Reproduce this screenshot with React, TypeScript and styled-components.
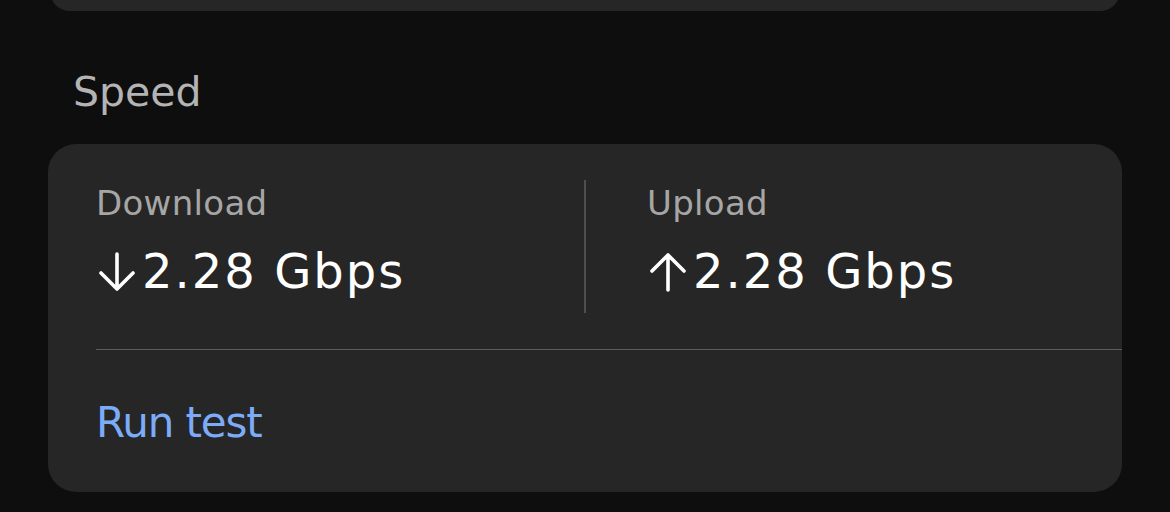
import React from 'react'
import styled, { createGlobalStyle } from 'styled-components'

const GlobalStyle = createGlobalStyle`
  html, body {
    margin: 0;
    padding: 0;
    background: #0e0e0e;
  }
  body {
    font-family: "DejaVu Sans", Roboto, sans-serif;
    -webkit-font-smoothing: antialiased;
  }
`

type Dir = 'down' | 'up'

type Stat = {
  label: string
  dir: Dir
  value: string
}

const stats: Stat[] = [
  { label: 'Download', dir: 'down', value: '2.28 Gbps' },
  { label: 'Upload', dir: 'up', value: '2.28 Gbps' },
]

const ArrowIcon: React.FC<{ dir: Dir }> = ({ dir }) => (
  <ArrowSvg viewBox="0 0 40 40" aria-hidden="true">
    {dir === 'down' ? (
      <path d="M20 2 V37 M4 21 L20 37 L36 21" />
    ) : (
      <path d="M20 38 V3 M4 19 L20 3 L36 19" />
    )}
  </ArrowSvg>
)

const StatBlock: React.FC<{ stat: Stat }> = ({ stat }) => (
  <>
    <Label>{stat.label}</Label>
    <Value>
      <ArrowIcon dir={stat.dir} />
      {stat.value}
    </Value>
  </>
)

const App: React.FC = () => {
  return (
    <>
      <GlobalStyle />
      <Page>
        <PrevCard />
        <SectionTitle>Speed</SectionTitle>
        <Card>
          <StatsRow>
            <StatCol>
              <StatBlock stat={stats[0]} />
            </StatCol>
            <VDivider />
            <StatCol $inset>
              <StatBlock stat={stats[1]} />
            </StatCol>
          </StatsRow>
          <HDivider />
          <Action>Run test</Action>
        </Card>
      </Page>
    </>
  )
}

export default App

const Page = styled.div`
  width: 1170px;
  height: 512px;
  overflow: hidden;
  display: flex;
  flex-direction: column;
  padding: 0 48px;
  box-sizing: border-box;
`

const PrevCard = styled.div`
  height: 40px;
  margin: -29px 2px 0;
  background: #262626;
  border-radius: 28px;
`

const SectionTitle = styled.h2`
  margin: 57px 0 0 25px;
  font-size: 41px;
  line-height: 48px;
  font-weight: 400;
  color: #b4b4b4;
`

const Card = styled.div`
  margin-top: 28px;
  height: 348px;
  background: #262626;
  border-radius: 28px;
  padding: 36px 0 0 48px;
  box-sizing: border-box;
  display: flex;
  flex-direction: column;
`

const StatsRow = styled.div`
  display: grid;
  grid-template-columns: 488px 2px 1fr;
  height: 133px;
`

const StatCol = styled.div<{ $inset?: boolean }>`
  display: flex;
  flex-direction: column;
  padding-top: 3px;
  padding-left: ${(p) => (p.$inset ? '61px' : '0')};
`

const Label = styled.div`
  font-size: 34px;
  line-height: 40px;
  letter-spacing: 0.3px;
  color: #a6a6a6;
`

const Value = styled.div`
  margin-top: 20px;
  font-size: 48px;
  line-height: 56px;
  letter-spacing: 2px;
  color: #ffffff;
  white-space: nowrap;
`

const ArrowSvg = styled.svg`
  width: 40px;
  height: 40px;
  margin-left: 1px;
  margin-right: 5px;
  vertical-align: -4px;
  fill: none;
  stroke: #ffffff;
  stroke-width: 3.6;
  stroke-linecap: round;
  stroke-linejoin: round;
`

const VDivider = styled.div`
  width: 2px;
  background: #4e4e4e;
`

const HDivider = styled.div`
  height: 1px;
  margin-top: 36px;
  background: #5c5c5c;
`

const Action = styled.div`
  margin-top: 48px;
  font-size: 42px;
  line-height: 50px;
  letter-spacing: -1.1px;
  color: #7cacf8;
`
